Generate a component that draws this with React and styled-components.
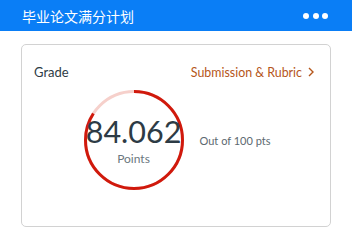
import styled, { createGlobalStyle } from "styled-components";

const GlobalStyle = createGlobalStyle`
  html, body {
    margin: 0;
    padding: 0;
    background: #ffffff;
    font-family: Lato, "Noto Sans CJK SC", sans-serif;
  }
`;

const Page = styled.div`
  width: 352px;
  height: 243px;
  overflow: hidden;
  background: #ffffff;
`;

const Header = styled.header`
  height: 31px;
  background-color: #0a7ef6;
  display: flex;
  align-items: center;
  justify-content: space-between;
  padding: 0 22px 0 22px;
  box-sizing: border-box;
`;

const Title = styled.h1`
  margin: 0;
  color: #ffffff;
  font-family: "Noto Sans CJK SC", sans-serif;
  font-size: 14px;
  font-weight: 400;
  line-height: 1;
`;

const Dots = styled.div`
  display: flex;
  gap: 3.5px;
  margin-right: 2px;
`;

const Dot = styled.span`
  width: 6px;
  height: 6px;
  border-radius: 50%;
  background: #ffffff;
`;

const Content = styled.main`
  padding: 13px 21px 0 21px;
`;

const Card = styled.section`
  height: 183px;
  box-sizing: border-box;
  border: 1px solid #d2d2d2;
  border-radius: 5px;
  padding: 17px 16px 0 12px;
`;

const CardHead = styled.div`
  display: flex;
  align-items: center;
  justify-content: space-between;
  height: 20px;
`;

const Label = styled.span`
  font-size: 13px;
  color: #2d3b45;
`;

const Link = styled.a`
  display: flex;
  align-items: center;
  gap: 6px;
  font-size: 12.4px;
  color: #b5561a;
  text-decoration: none;
`;

const Body = styled.div`
  display: flex;
  align-items: center;
  justify-content: center;
  gap: 16px;
  margin-top: 8px;
  padding-left: 6px;
`;

const Ring = styled.div`
  display: grid;
  width: 100px;
  height: 100px;

  & > * {
    grid-area: 1 / 1;
  }
`;

const Score = styled.div`
  display: flex;
  flex-direction: column;
  align-items: center;
  justify-content: center;
  padding-top: 1px;
`;

const Number = styled.span`
  font-size: 30.5px;
  line-height: 30px;
  color: #2d3b45;
`;

const Unit = styled.span`
  font-size: 12px;
  line-height: 14px;
  color: #6b7780;
  margin-top: 6px;
`;

const OutOf = styled.span`
  font-size: 11px;
  color: #5c6870;
`;

function ProgressRing({ value, max }) {
  const r = 48.5;
  const c = 2 * Math.PI * r;
  const part = (value / max) * c;
  return (
    <svg width="100" height="100" viewBox="0 0 100 100">
      <circle cx="50" cy="50" r={r} fill="none" stroke="#f6d0cb" strokeWidth="3" />
      <circle
        cx="50"
        cy="50"
        r={r}
        fill="none"
        stroke="#d0190c"
        strokeWidth="3"
        strokeDasharray={`${part} ${c}`}
        transform="rotate(-90 50 50)"
      />
    </svg>
  );
}

export default function App() {
  const score = 84.062;
  const total = 100;
  return (
    <Page>
      <GlobalStyle />
      <Header>
        <Title>毕业论文满分计划</Title>
        <Dots>
          <Dot />
          <Dot />
          <Dot />
        </Dots>
      </Header>
      <Content>
        <Card>
          <CardHead>
            <Label>Grade</Label>
            <Link href="#">
              Submission &amp; Rubric
              <svg width="6" height="10" viewBox="0 0 6 10">
                <path d="M1 1l4 4-4 4" fill="none" stroke="#b5561a" strokeWidth="1.4" />
              </svg>
            </Link>
          </CardHead>
          <Body>
            <Ring>
              <ProgressRing value={score} max={total} />
              <Score>
                <Number>{score}</Number>
                <Unit>Points</Unit>
              </Score>
            </Ring>
            <OutOf>Out of {total} pts</OutOf>
          </Body>
        </Card>
      </Content>
    </Page>
  );
}
